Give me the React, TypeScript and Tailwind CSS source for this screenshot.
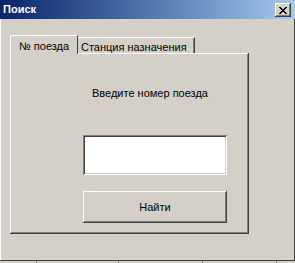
import { useState } from "react";

const raised =
  "shadow-[inset_-1px_-1px_#404040,inset_1px_1px_#ffffff,inset_-2px_-2px_#808080,inset_2px_2px_#d4d0c8]";
const sunken =
  "shadow-[inset_1px_1px_#808080,inset_-1px_-1px_#ffffff,inset_2px_2px_#404040,inset_-2px_-2px_#d4d0c8]";

export default function App() {
  const [tab, setTab] = useState(0);
  const [value, setValue] = useState("");

  return (
    <div
      className="flex h-[263px] w-[295px] flex-col overflow-hidden bg-[#d4d0c8] text-[11px] text-black"
      style={{ fontFamily: '"Liberation Sans", Arial, sans-serif' }}
    >
      {/* Title bar */}
      <div className="flex h-[19px] shrink-0 items-center justify-between bg-gradient-to-r from-[#0a246a] to-[#a6caf0] pl-[3px] pr-[4px]">
        <span className="text-[11px] font-bold text-white">Поиск</span>
        <button
          className={`mt-[1px] flex h-[14px] w-[16px] items-center justify-center bg-[#d4d0c8] ${raised}`}
        >
          <svg width="8" height="7" viewBox="0 0 8 7" shapeRendering="crispEdges">
            <path
              d="M0 0h2v1h-2zM6 0h2v1h-2zM1 1h2v1h-2zM5 1h2v1h-2zM2 2h4v1h-4zM3 3h2v1h-2zM2 4h4v1h-4zM1 5h2v1h-2zM5 5h2v1h-2zM0 6h2v1h-2zM6 6h2v1h-2z"
              fill="#000"
            />
          </svg>
        </button>
      </div>

      <div className="flex flex-1 flex-col border-l border-l-[#ffffff] border-r border-r-[#404040] pl-[9px] pt-[16px]">
        {/* Tabs */}
        <div className="flex h-[18px] items-end">
          <button
            onClick={() => setTab(0)}
            className={`relative z-10 -mb-px flex h-[19px] w-[68px] items-start rounded-tl-[2px] border-l border-t border-r border-l-white border-t-white border-r-[#404040] bg-[#d4d0c8] pl-[8px] pt-[2px] ${
              tab === 0 ? "text-black" : "text-black"
            }`}
          >
            № поезда
          </button>
          <button
            onClick={() => setTab(1)}
            className="flex h-[16px] w-[117px] items-start border-t border-r border-t-white border-r-[#404040] bg-[#d4d0c8] pl-[3px] pt-[1px] shadow-[inset_-1px_0_#808080]"
          >
            Станция назначения
          </button>
        </div>

        {/* Panel */}
        <div className={`flex h-[181px] w-[239px] flex-col ${raised}`}>
          <div className="ml-[82px] mt-[34px] h-[13px] leading-[13px]">
            Введите номер поезда
          </div>
          <input
            value={value}
            onChange={(e) => setValue(e.target.value)}
            className={`ml-[73px] mt-[35px] h-[40px] w-[144px] bg-white px-[4px] outline-none ${sunken}`}
          />
          <button
            className={`ml-[73px] mt-[16px] h-[32px] w-[144px] bg-[#d4d0c8] ${raised}`}
          >
            Найти
          </button>
        </div>
      </div>

      {/* Bottom edge */}
      <div className="flex h-[3px] shrink-0 border-t border-t-[#404040]">
        <div className="w-[37px] border-r border-r-[#808080]" />
        <div className="w-[82px] border-r border-r-[#808080]" />
        <div className="w-[84px] border-r border-r-[#808080]" />
        <div className="w-[74px] border-r border-r-[#808080]" />
      </div>
    </div>
  );
}
